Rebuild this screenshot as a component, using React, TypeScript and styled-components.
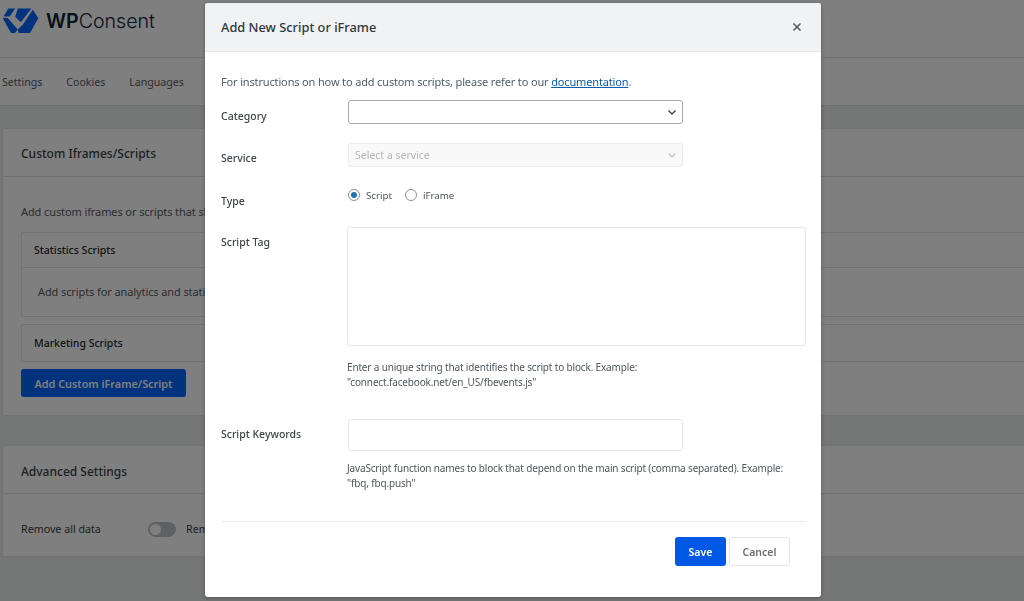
import React from "react";
import styled, { createGlobalStyle } from "styled-components";

const Global = createGlobalStyle`
  html, body { margin: 0; padding: 0; height: 100%; overflow: hidden; background: #ebedec; }
  * { box-sizing: border-box; }
  body { font-family: "Noto Sans", "Open Sans", "Liberation Sans", sans-serif; color: #23282d; }
`;

const Page = styled.div`
  width: 1024px;
  height: 601px;
  overflow: hidden;
`;
const Header = styled.header`
  height: 58px;
  background: #fff;
  border-bottom: 1px solid #e2e4e7;
  display: flex;
  align-items: center;
  gap: 7px;
  padding: 0 0 15px 2px;
`;
const LogoText = styled.div`
  font-family: Inter, "Noto Sans", sans-serif;
  font-size: 19.6px;
  font-weight: 300;
  color: #0c2238;
  b { font-weight: 600; }
`;
const Nav = styled.nav`
  height: 48px;
  background: #fff;
  border-bottom: 1px solid #dfe1e4;
  display: flex;
  align-items: center;
  gap: 24px;
  padding: 0 0 0 2px;
`;
const NavItem = styled.a`
  font-size: 10.6px;
  color: #555a60;
`;
const Main = styled.main`
  padding: 22px 0 0 2px;
  display: flex;
  flex-direction: column;
  gap: 29px;
`;
const Card = styled.section`
  background: #fff;
  border: 1px solid #e2e4e7;
  border-right: 0;
  border-radius: 2px 0 0 2px;
`;
const CardHeader = styled.h2<{ $nudge: number }>`
  margin: 0;
  height: 48px;
  display: flex;
  align-items: center;
  padding: ${(p) => p.$nudge}px 0 0 18px;
  font-size: 12px;
  font-weight: 500;
  color: #3a3f44;
  border-bottom: 1px solid #dfe1e4;
`;
const CardBody = styled.div`
  padding: 27px 0 18px 18px;
`;
const Intro = styled.p`
  margin: 0 0 12px;
  font-size: 11px;
  letter-spacing: -0.1px;
  line-height: 16px;
  color: #555a60;
`;
const Box = styled.div`
  border: 1px solid #e2e4e7;
  border-right: 0;
  border-radius: 2px 0 0 2px;
  margin-bottom: 7px;
`;
const BoxHeader = styled.h3<{ $ruled?: boolean }>`
  margin: 0;
  height: ${(p) => (p.$ruled ? 35 : 36)}px;
  display: flex;
  align-items: center;
  padding-left: 12px;
  font-size: 10.5px;
  font-weight: 500;
  color: #23282d;
  border-bottom: ${(p) => (p.$ruled ? "1px solid #e2e4e7" : "none")};
`;
const BoxBody = styled.p`
  margin: 0;
  height: 48px;
  padding: 16px 0 0 16px;
  font-size: 11px;
  letter-spacing: -0.1px;
  line-height: 16px;
  color: #555a60;
`;
const PageButton = styled.button`
  display: block;
  width: 165px;
  height: 28px;
  border: 0;
  border-radius: 3px;
  background: #0064fa;
  color: #fff;
  font: 600 10.8px "Noto Sans", sans-serif;
  padding: 0;
`;
const SettingRow = styled.div`
  height: 62px;
  display: flex;
  align-items: center;
  padding: 8px 0 0 18px;
  font-size: 10.7px;
  color: #3a3f44;
`;
const SettingLabel = styled.span`
  width: 127px;
`;
const Toggle = styled.span`
  width: 28px;
  height: 15px;
  border-radius: 8px;
  background: #bfc1c4;
  position: relative;
  margin-right: 10px;
  &::after {
    content: "";
    position: absolute;
    left: 2px;
    top: 2px;
    width: 11px;
    height: 11px;
    border-radius: 50%;
    background: #fff;
  }
`;

const Backdrop = styled.div`
  position: fixed;
  inset: 0;
  background: rgba(0, 0, 0, 0.5);
`;
const Modal = styled.div`
  position: fixed;
  left: 205px;
  top: 3px;
  width: 616px;
  height: 594px;
  background: #fff;
  border-radius: 3px;
  box-shadow: 0 1px 4px rgba(0, 0, 0, 0.3);
  overflow: hidden;
`;
const ModalHeader = styled.div`
  height: 49px;
  background: #f1f2f4;
  border-bottom: 1px solid #e9eaec;
  display: flex;
  align-items: center;
  justify-content: space-between;
  padding: 0 19px 0 16px;
`;
const ModalTitle = styled.h1`
  margin: 0;
  font-size: 12.8px;
  font-weight: 500;
  color: #32373c;
`;
const CloseBtn = styled.span`
  display: flex;
  color: #50575e;
`;
const ModalBody = styled.div`
  padding: 22px 16px 0;
`;
const Instructions = styled.p`
  margin: 0 0 10px;
  font-size: 11px;
  letter-spacing: -0.15px;
  line-height: 16px;
  color: #50616e;
  a {
    color: #0b5cab;
    text-decoration: underline;
  }
`;
const FormRow = styled.div<{ $height: number }>`
  display: grid;
  grid-template-columns: 126px 1fr;
  height: ${(p) => p.$height}px;
`;
const Label = styled.label<{ $top: number }>`
  font-size: 10.5px;
  font-weight: 500;
  line-height: 16px;
  padding-top: ${(p) => p.$top}px;
  color: #3e4449;
`;
const Select = styled.div<{ $disabled?: boolean }>`
  width: 335px;
  height: 24px;
  margin-left: 1px;
  border: 1px solid ${(p) => (p.$disabled ? "#ebebec" : "#a7aaad")};
  border-radius: 3px;
  background: ${(p) => (p.$disabled ? "#f9f9f9" : "#fff")};
  display: flex;
  align-items: center;
  justify-content: space-between;
  padding: 0 4px 0 6px;
  font-size: 10.5px;
  color: #b3b5b8;
`;
const RadioGroup = styled.div`
  display: flex;
  align-items: center;
  height: 18px;
  padding-left: 1px;
  font-size: 9.8px;
  letter-spacing: -0.05px;
  color: #50575e;
`;
const RadioDot = styled.span<{ $on?: boolean }>`
  width: 12px;
  height: 12px;
  border-radius: 50%;
  border: 1px solid #8c8f94;
  margin-right: 6px;
  display: flex;
  align-items: center;
  justify-content: center;
  &::after {
    content: "";
    width: 6px;
    height: 6px;
    border-radius: 50%;
    background: ${(p) => (p.$on ? "#2271b1" : "transparent")};
  }
`;
const RadioLabel = styled.span`
  margin-right: 13px;
`;
const TextArea = styled.div`
  width: 459px;
  height: 119px;
  border: 1px solid #e4e5e7;
  border-radius: 3px;
`;
const TextInput = styled.div`
  width: 335px;
  height: 32px;
  margin-left: 1px;
  border: 1px solid #e4e5e7;
  border-radius: 3px;
`;
const Hint = styled.p<{ $top: number }>`
  margin: ${(p) => p.$top}px 0 0;
  width: 455px;
  font-size: 10px;
  letter-spacing: -0.16px;
  line-height: 15px;
  color: #50575e;
`;
const Divider = styled.hr`
  margin: 0;
  border: 0;
  border-top: 1px solid #e9eaec;
`;
const Footer = styled.div`
  display: flex;
  justify-content: flex-end;
  gap: 3px;
  padding: 15px 15px 0 0;
`;
const SaveBtn = styled.button`
  width: 51px;
  height: 29px;
  border: 0;
  border-radius: 3px;
  background: #0059e6;
  color: #fff;
  font: 600 10.5px "Noto Sans", sans-serif;
  padding: 0;
`;
const CancelBtn = styled.button`
  width: 61px;
  height: 29px;
  border: 1px solid #e4e5e7;
  border-radius: 3px;
  background: #fff;
  color: #6b6f73;
  font: 600 10.5px "Noto Sans", sans-serif;
  padding: 0;
`;

const Logo = () => (
  <svg width="37" height="26" viewBox="4 12 112 78">
    <path fill="#0064fa" d="M23 13h21L27 37H9z" />
    <path fill="#0064fa" d="M52 13h41L61 55 44 38z" />
    <path fill="#0064fa" d="M6 42h15l19 21 6 7-3 17H31z" />
    <path fill="#0064fa" d="M97 17l17 25-25 45H54l-2-10 15-15z" />
    <path fill="#0064fa" d="M46 70l6 7-9 10h-6z" />
  </svg>
);
const Chevron = ({ color }: { color: string }) => (
  <svg width="12" height="12" viewBox="0 0 12 12" fill="none">
    <path d="M2.500 4.500 6 8l3.500-3.500" stroke={color} strokeWidth="1.400" />
  </svg>
);
const Cross = () => (
  <svg width="10" height="10" viewBox="0 0 10 10" fill="none">
    <path d="M1.500 1.500l7 7m0-7l-7 7" stroke="currentColor" strokeWidth="1.500" />
  </svg>
);

export default function App() {
  return (
    <Page>
      <Global />
      <Header>
        <Logo />
        <LogoText>
          <b>WP</b>Consent
        </LogoText>
      </Header>
      <Nav>
        <NavItem>Settings</NavItem>
        <NavItem>Cookies</NavItem>
        <NavItem>Languages</NavItem>
      </Nav>
      <Main>
        <Card>
          <CardHeader $nudge={1}>Custom Iframes/Scripts</CardHeader>
          <CardBody>
            <Intro>Add custom iframes or scripts that should be blocked until consent is given.</Intro>
            <Box>
              <BoxHeader $ruled>Statistics Scripts</BoxHeader>
              <BoxBody>Add scripts for analytics and statistics tracking.</BoxBody>
            </Box>
            <Box>
              <BoxHeader>Marketing Scripts</BoxHeader>
            </Box>
            <PageButton>Add Custom iFrame/Script</PageButton>
          </CardBody>
        </Card>
        <Card>
          <CardHeader $nudge={3}>Advanced Settings</CardHeader>
          <SettingRow>
            <SettingLabel>Remove all data</SettingLabel>
            <Toggle />
            <span>Remove all data on uninstall</span>
          </SettingRow>
        </Card>
      </Main>
      <Backdrop />
      <Modal>
        <ModalHeader>
          <ModalTitle>Add New Script or iFrame</ModalTitle>
          <CloseBtn>
            <Cross />
          </CloseBtn>
        </ModalHeader>
        <ModalBody>
          <Instructions>
            For instructions on how to add custom scripts, please refer to our <a>documentation</a>.
          </Instructions>
          <FormRow $height={43}>
            <Label $top={8}>Category</Label>
            <Select>
              <span />
              <Chevron color="#3c434a" />
            </Select>
          </FormRow>
          <FormRow $height={43}>
            <Label $top={7}>Service</Label>
            <Select $disabled>
              <span>Select a service</span>
              <Chevron color="#c4c6c8" />
            </Select>
          </FormRow>
          <FormRow $height={41}>
            <Label $top={7}>Type</Label>
            <RadioGroup>
              <RadioDot $on />
              <RadioLabel>Script</RadioLabel>
              <RadioDot />
              <RadioLabel>iFrame</RadioLabel>
            </RadioGroup>
          </FormRow>
          <FormRow $height={192}>
            <Label $top={7}>Script Tag</Label>
            <div>
              <TextArea />
              <Hint $top={14}>
                Enter a unique string that identifies the script to block. Example:
                <br />
                "connect.facebook.net/en_US/fbevents.js"
              </Hint>
            </div>
          </FormRow>
          <FormRow $height={102}>
            <Label $top={7}>Script Keywords</Label>
            <div>
              <TextInput />
              <Hint $top={10}>
                JavaScript function names to block that depend on the main script (comma separated). Example:
                <br />
                "fbq, fbq.push"
              </Hint>
            </div>
          </FormRow>
          <Divider />
          <Footer>
            <SaveBtn>Save</SaveBtn>
            <CancelBtn>Cancel</CancelBtn>
          </Footer>
        </ModalBody>
      </Modal>
    </Page>
  );
}
